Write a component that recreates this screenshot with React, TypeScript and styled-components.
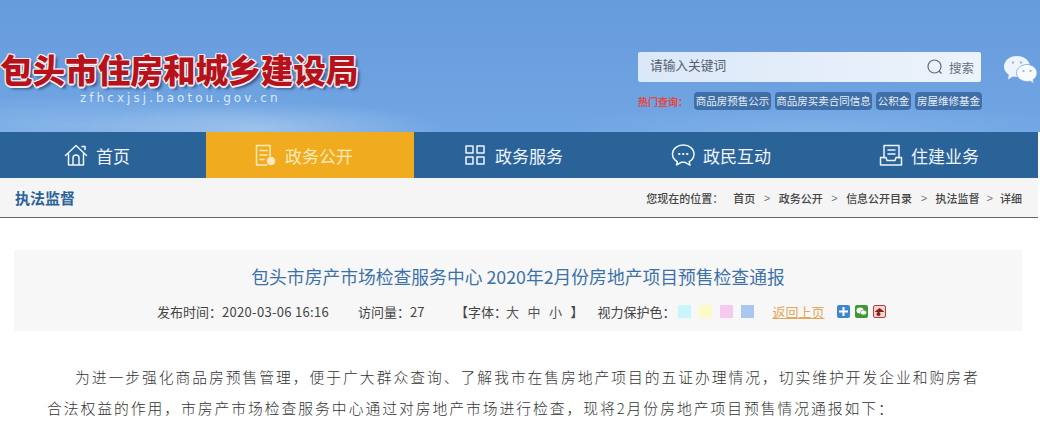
import React from "react";
import styled, { createGlobalStyle } from "styled-components";

const cjk = `"Noto Sans CJK SC", "Liberation Sans", sans-serif`;

const Global = createGlobalStyle`
  html, body { margin: 0; padding: 0; background: #fff; }
  body { font-family: ${cjk}; width: 1040px; height: 423px; overflow: hidden; }
  * { box-sizing: border-box; }
`;

const Header = styled.header`
  height: 132px;
  display: flex;
  background:
    radial-gradient(ellipse 180px 26px at 260px 128px, rgba(190, 215, 240, 0.55), transparent),
    radial-gradient(ellipse 220px 30px at 80px 125px, rgba(170, 205, 240, 0.4), transparent),
    radial-gradient(ellipse 260px 24px at 820px 128px, rgba(150, 195, 240, 0.35), transparent),
    linear-gradient(180deg, #669cdd 0%, #6b9fdf 45%, #71a6e4 100%);
`;

const Brand = styled.div`
  width: 638px;
  padding-top: 49px;
`;

const BrandTitle = styled.h1`
  margin: 0;
  font-size: 32.6px;
  line-height: 40px;
  font-weight: 900;
  white-space: nowrap;
  color: #b5121b;
  text-shadow:
    1.5px 0 0 #f6e9ea, -1.5px 0 0 #f6e9ea, 0 1.5px 0 #f6e9ea, 0 -1.5px 0 #f6e9ea,
    1px 1px 0 #f6e9ea, -1px -1px 0 #f6e9ea, 1px -1px 0 #f6e9ea, -1px 1px 0 #f6e9ea,
    3px 3px 3px rgba(30, 60, 110, 0.75);
`;

const Domain = styled.div`
  padding-left: 80px;
  margin-top: 1px;
  font-family: "DejaVu Sans", sans-serif;
  font-size: 12px;
  line-height: 16px;
  letter-spacing: 3.05px;
  color: #dce9f6;
`;

const SearchCol = styled.div`
  width: 344px;
  padding-top: 52px;
`;

const SearchBox = styled.div`
  height: 30px;
  width: 343px;
  display: flex;
  align-items: center;
  padding: 0 7px 0 12px;
  border-radius: 2px;
  background: linear-gradient(90deg, #dbe8f8 0%, #edf3fb 100%);
  color: #54606e;
`;

const Placeholder = styled.span`
  flex: 1;
  font-size: 12.7px;
  margin-top: -5px;
`;

const SearchLabel = styled.span`
  font-size: 12.5px;
  margin-left: 6px;
  color: #66717f;
`;

const HotRow = styled.div`
  display: flex;
  align-items: center;
  gap: 4px;
  margin-top: 10px;
  white-space: nowrap;
`;

const HotLabel = styled.span`
  width: 52px;
  font-size: 10px;
  font-weight: 700;
  color: #e8453c;
`;

const Tag = styled.span<{ $w: number }>`
  width: ${(p) => p.$w}px;
  height: 18px;
  line-height: 18px;
  text-align: center;
  border-radius: 4px;
  background: #3f6fa6;
  color: #e6eef7;
  font-size: 10.5px;
  overflow: hidden;
`;

const WeChatWrap = styled.div`
  margin: 54px 0 0 21px;
`;

const Nav = styled.nav`
  width: 1038px;
  height: 46px;
  display: grid;
  grid-template-columns: 206px 208px 208px 208px 208px;
  background: #2a6398;
`;

const NavItem = styled.a<{ $active?: boolean; $shift: number }>`
  display: flex;
  align-items: center;
  justify-content: center;
  gap: 8px;
  padding-right: ${(p) => p.$shift}px;
  font-size: 17px;
  color: ${(p) => (p.$active ? "#fbe9bd" : "#eef4fa")};
  background: ${(p) => (p.$active ? "#f0ac1e" : "transparent")};
`;

const SubBar = styled.div`
  width: 1038px;
  height: 40px;
  display: flex;
  align-items: center;
  justify-content: space-between;
  padding: 0 16px 0 15px;
  background: #f5f5f5;
  border-bottom: 1px solid #5f6873;
`;

const SubTitle = styled.div`
  font-size: 15px;
  font-weight: 700;
  color: #2a6398;
`;

const Crumbs = styled.div`
  display: flex;
  align-items: center;
  font-size: 11px;
  font-weight: 500;
  color: #454545;
  white-space: nowrap;
`;

const CrumbLead = styled.span`
  margin-right: 10px;
`;

const CrumbSep = styled.span<{ $tight?: boolean }>`
  margin: 0 ${(p) => (p.$tight ? 7 : 8.5)}px;
  color: #777;
  font-family: "Liberation Sans", sans-serif;
`;

const ArticleHead = styled.section`
  margin: 32px 18px 0 14px;
  height: 81px;
  background: #f7f7f7;
  display: flex;
  flex-direction: column;
  align-items: center;
  padding-top: 12px;
`;

const ArticleTitle = styled.h2`
  margin: 0;
  font-size: 17.8px;
  line-height: 28px;
  font-weight: 400;
  color: #3d72a8;
  white-space: nowrap;
`;

const Meta = styled.div`
  display: flex;
  align-items: center;
  height: 20px;
  margin-top: 11px;
  font-size: 13px;
  color: #444;
  white-space: nowrap;
  width: 100%;
  padding-left: 143px;
`;

const MetaItem = styled.span<{ $w: number }>`
  width: ${(p) => p.$w}px;
`;

const Digits = styled.span`
  letter-spacing: 0.3px;
`;

const FontSize = styled.span`
  width: 21.5px;
  text-align: left;
  color: #555;
`;

const Swatch = styled.i<{ $c: string }>`
  width: 13px;
  height: 13px;
  margin-right: 8px;
  background: ${(p) => p.$c};
`;

const BackLink = styled.a`
  margin: 0 12px 0 11px;
  color: #e2a95a;
  text-decoration: underline;
  text-decoration-thickness: 1px;
`;

const ShareIcon = styled.i<{ $c: string; $edge?: string }>`
  width: 13px;
  height: 13px;
  margin-right: 5px;
  display: flex;
  align-items: center;
  justify-content: center;
  border-radius: 2px;
  background: ${(p) => p.$c};
  border: ${(p) => (p.$edge ? `1px solid ${p.$edge}` : "none")};
`;

const Body = styled.p`
  margin: 30px 0 0;
  padding: 0 55px 0 47px;
  font-size: 14.8px;
  line-height: 31px;
  letter-spacing: 1.96px;
  font-weight: 300;
  color: #333;
  text-indent: 28px;
`;

const NavSvg = styled.svg`
  width: 24px;
  height: 24px;
  flex: none;
  fill: none;
  stroke: currentColor;
  stroke-width: 1.5;
  stroke-linejoin: round;
  stroke-linecap: round;
`;

const tags: [string, number][] = [
  ["商品房预售公示", 77],
  ["商品房买卖合同信息", 97],
  ["公积金", 35],
  ["房屋维修基金", 67],
];

function WeChat() {
  return (
    <svg width="35" height="32" viewBox="0 0 35 32">
      <path d="M14 2C6.8 2 1 6.6 1 12.6c0 3.4 1.9 6.3 4.8 8.2L5 25.5l5-3c1.2.3 2.6.5 4 .5 7.2 0 13-4.6 13-10.4S21.2 2 14 2z" fill="#eef4fb" />
      <path d="M24 10.5c-5.8 0-10.5 3.8-10.5 8.5s4.7 8.500 10.500 8.500c1 0 2-.1 2.900-.4l3.900 2.400-.7-3.800c2.300-1.600 3.900-4 3.900-6.700 0-4.700-4.700-8.500-10-8.500z" fill="#f8fbfe" stroke="#7aa9e0" strokeWidth="0.8" />
      <circle cx="10" cy="8.5" r="1.3" fill="#a9bdd4" />
      <circle cx="18" cy="8.5" r="1.3" fill="#a9bdd4" />
      <circle cx="20.5" cy="17" r="1.2" fill="#a9bdd4" />
      <circle cx="27.5" cy="17" r="1.2" fill="#a9bdd4" />
    </svg>
  );
}

export default function App() {
  return (
    <>
      <Global />
      <Header>
        <Brand>
          <BrandTitle>包头市住房和城乡建设局</BrandTitle>
          <Domain>zfhcxjsj.baotou.gov.cn</Domain>
        </Brand>
        <SearchCol>
          <SearchBox>
            <Placeholder>请输入关键词</Placeholder>
            <svg width="16" height="16" viewBox="0 0 16 16" fill="none" stroke="#5f6b78" strokeWidth="1.2">
              <circle cx="7.5" cy="7.5" r="6.5" />
              <path d="M12 12l2.500 2.500" />
            </svg>
            <SearchLabel>搜索</SearchLabel>
          </SearchBox>
          <HotRow>
            <HotLabel>热门查询：</HotLabel>
            {tags.map(([t, w]) => (
              <Tag key={t} $w={w}>{t}</Tag>
            ))}
          </HotRow>
        </SearchCol>
        <WeChatWrap>
          <WeChat />
        </WeChatWrap>
      </Header>

      <Nav>
        <NavItem $shift={12}>
          <NavSvg viewBox="0 0 24 24">
            <path d="M1.5 12.5L12 2.5l10.5 10M4.500 10.500V22h15V10.500M9 22v-7a3 3 0 0 1 6 0v7M18 3.500h3v3" />
          </NavSvg>
          首页
        </NavItem>
        <NavItem $active $shift={14}>
          <NavSvg viewBox="0 0 24 24">
            <path d="M17 13V2.500H3.500v19.500H14M7 7.500h7M7 12h7M7 16.500h4" />
            <circle cx="18" cy="18" r="3.5" fill="currentColor" />
          </NavSvg>
          政务公开
        </NavItem>
        <NavItem $shift={10}>
          <NavSvg viewBox="0 0 24 24">
            <path d="M3 3h7v7H3zM14 3h7v7h-7zM3 14h7v7H3zM14 14h7v7h-7z" />
          </NavSvg>
          政务服务
        </NavItem>
        <NavItem $shift={10}>
          <NavSvg viewBox="0 0 24 24">
            <path d="M12 2c-5.800 0-10.500 4-10.500 9 0 3.200 1.900 6 4.800 7.600L5.500 22l5-2.800c.5 0 1 .1 1.500.1s1.500 0 2 0l5 2.800-.8-3.400c2.900-1.600 4.800-4.400 4.800-7.700 0-5-4.700-9-10.500-9z" />
            <path d="M8 11h.5M12 11h.5M16 11h.5" strokeWidth="2" />
          </NavSvg>
          政民互动
        </NavItem>
        <NavItem $shift={10}>
          <NavSvg viewBox="0 0 24 24">
            <path d="M5 15V2.500h15V15M9 7h7M9 11h7M1.500 14.500H7l1 3h8l1-3h5.500V22h-21z" />
          </NavSvg>
          住建业务
        </NavItem>
      </Nav>

      <SubBar>
        <SubTitle>执法监督</SubTitle>
        <Crumbs>
          <CrumbLead>您现在的位置：</CrumbLead>
          首页<CrumbSep>&gt;</CrumbSep>政务公开<CrumbSep>&gt;</CrumbSep>信息公开目录<CrumbSep>&gt;</CrumbSep>执法监督<CrumbSep $tight>&gt;</CrumbSep>详细
        </Crumbs>
      </SubBar>

      <ArticleHead>
        <ArticleTitle>包头市房产市场检查服务中心 2020年2月份房地产项目预售检查通报</ArticleTitle>
        <Meta>
          <MetaItem $w={201}>发布时间：<Digits>2020-03-06 16:16</Digits></MetaItem>
          <MetaItem $w={97}>访问量：27</MetaItem>
          <MetaItem $w={51}>【字体：</MetaItem>
          <FontSize>大</FontSize>
          <FontSize>中</FontSize>
          <FontSize>小</FontSize>
          <MetaItem $w={27}>】</MetaItem>
          <MetaItem $w={80}>视力保护色：</MetaItem>
          <Swatch $c="#c9f6fb" />
          <Swatch $c="#fbfbc8" />
          <Swatch $c="#f6c9f1" />
          <Swatch $c="#a9c8ef" />
          <BackLink>返回上页</BackLink>
          <ShareIcon $c="#3f86d0">
            <svg width="9" height="9" viewBox="0 0 9 9" stroke="#fff" strokeWidth="2">
              <path d="M4.5 0v9M0 4.500h9" />
            </svg>
          </ShareIcon>
          <ShareIcon $c="#3b9a35">
            <svg width="11" height="9" viewBox="0 0 11 9" fill="#fff">
              <ellipse cx="4" cy="3.5" rx="3.5" ry="3" />
              <ellipse cx="7.5" cy="5.5" rx="3" ry="2.5" stroke="#3b9a35" strokeWidth="0.6" />
            </svg>
          </ShareIcon>
          <ShareIcon $c="#f2d5d2" $edge="#b8403a">
            <svg width="11" height="11" viewBox="0 0 11 11" fill="#8a1f1a">
              <path d="M1 5.500L5.500 2 10 5.500V6H1z" />
              <circle cx="4.500" cy="8" r="2" />
            </svg>
          </ShareIcon>
        </Meta>
      </ArticleHead>

      <Body>
        为进一步强化商品房预售管理，便于广大群众查询、了解我市在售房地产项目的五证办理情况，切实维护开发企业和购房者合法权益的作用，市房产市场检查服务中心通过对房地产市场进行检查，现将2月份房地产项目预售情况通报如下：
      </Body>
    </>
  );
}
